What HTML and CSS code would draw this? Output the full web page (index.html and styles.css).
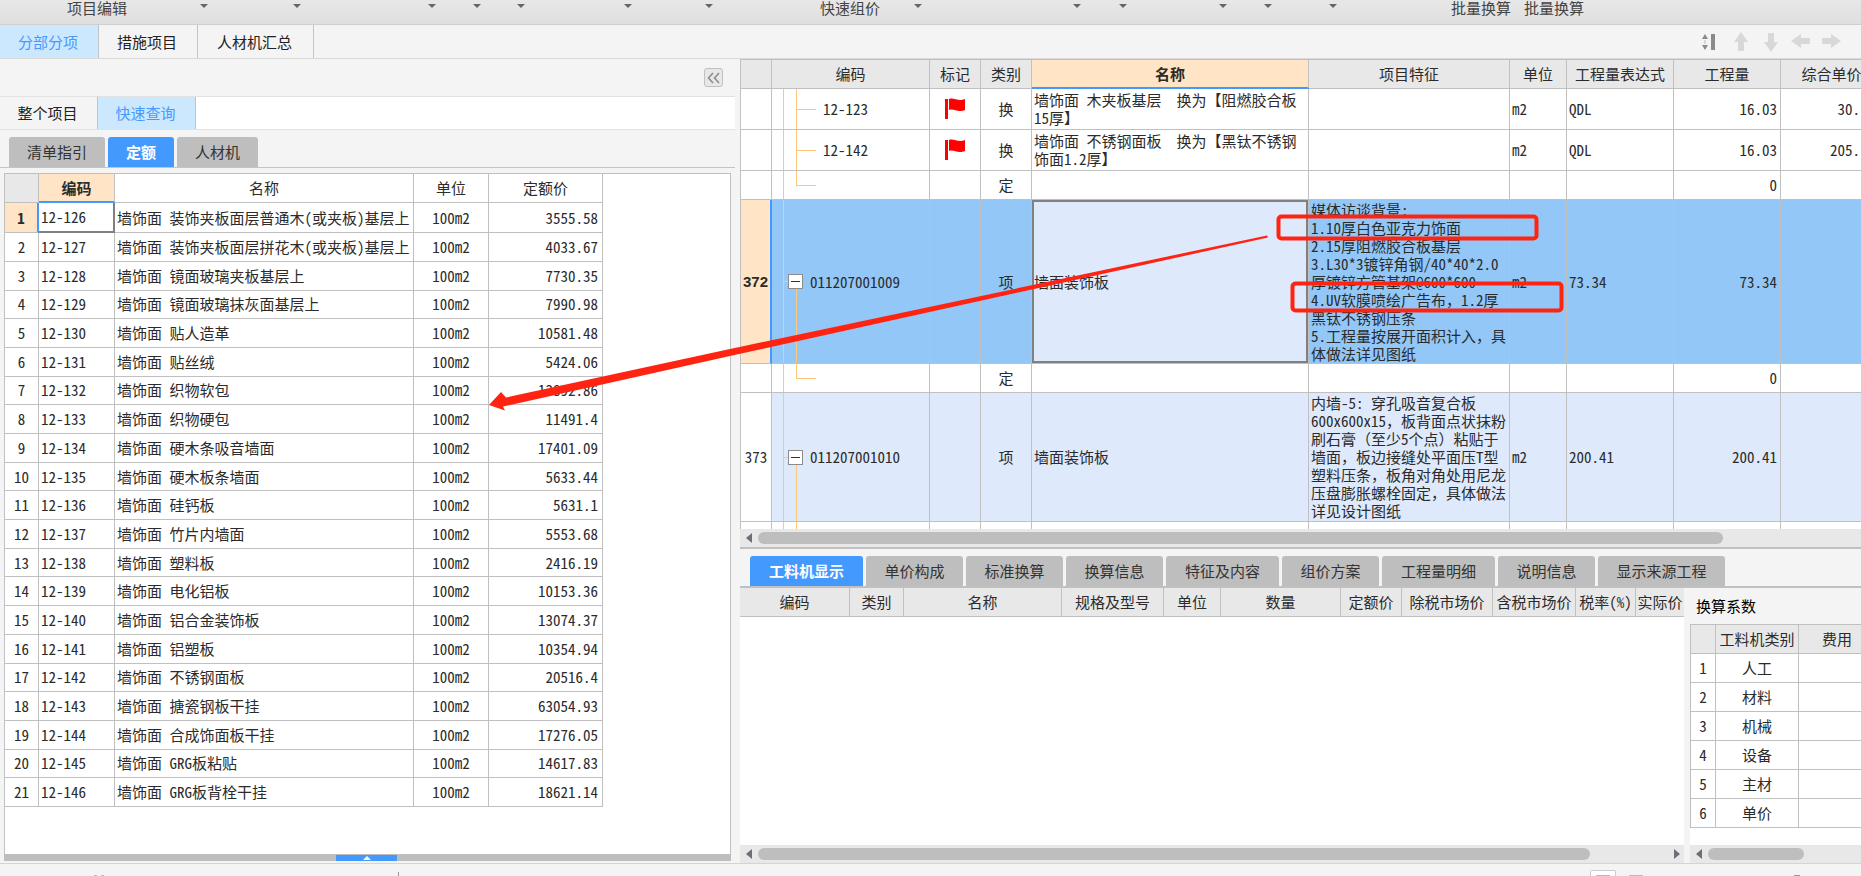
FILE: index.html
```html
<!DOCTYPE html>
<html lang="zh-CN">
<head>
<meta charset="utf-8">
<title>分部分项</title>
<link rel="stylesheet" href="styles.css">
</head>
<body>
<header class="ribbon">
  <button>项目编辑</button>
  <button aria-label="菜单"><i class="caret"></i></button>
  <button aria-label="菜单"><i class="caret"></i></button>
  <button aria-label="菜单"><i class="caret"></i></button>
  <button aria-label="菜单"><i class="caret"></i></button>
  <button aria-label="菜单"><i class="caret"></i></button>
  <button aria-label="菜单"><i class="caret"></i></button>
  <button aria-label="菜单"><i class="caret"></i></button>
  <button>快速组价</button>
  <button aria-label="菜单"><i class="caret"></i></button>
  <button aria-label="菜单"><i class="caret"></i></button>
  <button aria-label="菜单"><i class="caret"></i></button>
  <button aria-label="菜单"><i class="caret"></i></button>
  <button aria-label="菜单"><i class="caret"></i></button>
  <button aria-label="菜单"><i class="caret"></i></button>
  <button>批量换算</button>
  <button>批量换算</button>
</header>

<nav class="tabs main-tabs">
  <button class="tab active">分部分项</button>
  <button class="tab">措施项目</button>
  <button class="tab wide">人材机汇总</button>
  <div class="tools">
    <button aria-label="行高"><svg width="20" height="20" viewBox="0 0 20 20"><path d="M1 7l3-5 3 5zM1 13l3 5 3-5z" fill="#8a8a8a"/><path d="M4 8v4" stroke="#bbb" stroke-width="1"/><path d="M12 2v16" stroke="#8a8a8a" stroke-width="4"/></svg></button>
    <button aria-label="上移"><svg width="20" height="20" viewBox="0 0 20 20"><path d="M10 0l7 10h-4v9H7v-9H3z" fill="#d8d8d8"/></svg></button>
    <button aria-label="下移"><svg width="20" height="20" viewBox="0 0 20 20"><path d="M10 20l7-10h-4V1H7v9H3z" fill="#d8d8d8"/></svg></button>
    <button aria-label="左移"><svg width="20" height="20" viewBox="0 0 20 20"><path d="M0 9l10-7v4h9v6h-9v4z" fill="#d8d8d8"/></svg></button>
    <button aria-label="右移"><svg width="20" height="20" viewBox="0 0 20 20"><path d="M20 9L10 2v4H1v6h9v4z" fill="#d8d8d8"/></svg></button>
  </div>
</nav>

<main class="work">
  <section class="left">
    <div class="strip"><button class="collapse" aria-label="收起"><svg width="13" height="12" viewBox="0 0 13 12"><path d="M6 1L1.500 6L6 11M12 1L7.500 6L12 11" fill="none" stroke="#8c8c8c" stroke-width="1.600"/></svg></button></div>
    <nav class="tabs sub-tabs">
      <button class="tab">整个项目</button>
      <button class="tab active">快速查询</button>
    </nav>
    <nav class="pills left-pills">
      <button class="pill">清单指引</button>
      <button class="pill active">定额</button>
      <button class="pill">人材机</button>
    </nav>
    <div class="box">
      <table class="grid quota">
        <colgroup><col class="q0"><col class="q1"><col class="q2"><col class="q3"><col class="q4"></colgroup>
        <thead><tr><th class="corner"></th><th class="picked">编码</th><th>名称</th><th>单位</th><th>定额价</th></tr></thead>
        <tbody>
        <tr class="current"><th>1</th><td class="cursor">12-126</td><td>墙饰面 装饰夹板面层普通木(或夹板)基层上</td><td>100m2</td><td>3555.58</td></tr>
        <tr><th>2</th><td>12-127</td><td>墙饰面 装饰夹板面层拼花木(或夹板)基层上</td><td>100m2</td><td>4033.67</td></tr>
        <tr><th>3</th><td>12-128</td><td>墙饰面 镜面玻璃夹板基层上</td><td>100m2</td><td>7730.35</td></tr>
        <tr><th>4</th><td>12-129</td><td>墙饰面 镜面玻璃抹灰面基层上</td><td>100m2</td><td>7990.98</td></tr>
        <tr><th>5</th><td>12-130</td><td>墙饰面 贴人造革</td><td>100m2</td><td>10581.48</td></tr>
        <tr><th>6</th><td>12-131</td><td>墙饰面 贴丝绒</td><td>100m2</td><td>5424.06</td></tr>
        <tr><th>7</th><td>12-132</td><td>墙饰面 织物软包</td><td>100m2</td><td>13892.86</td></tr>
        <tr><th>8</th><td>12-133</td><td>墙饰面 织物硬包</td><td>100m2</td><td>11491.4</td></tr>
        <tr><th>9</th><td>12-134</td><td>墙饰面 硬木条吸音墙面</td><td>100m2</td><td>17401.09</td></tr>
        <tr><th>10</th><td>12-135</td><td>墙饰面 硬木板条墙面</td><td>100m2</td><td>5633.44</td></tr>
        <tr><th>11</th><td>12-136</td><td>墙饰面 硅钙板</td><td>100m2</td><td>5631.1</td></tr>
        <tr><th>12</th><td>12-137</td><td>墙饰面 竹片内墙面</td><td>100m2</td><td>5553.68</td></tr>
        <tr><th>13</th><td>12-138</td><td>墙饰面 塑料板</td><td>100m2</td><td>2416.19</td></tr>
        <tr><th>14</th><td>12-139</td><td>墙饰面 电化铝板</td><td>100m2</td><td>10153.36</td></tr>
        <tr><th>15</th><td>12-140</td><td>墙饰面 铝合金装饰板</td><td>100m2</td><td>13074.37</td></tr>
        <tr><th>16</th><td>12-141</td><td>墙饰面 铝塑板</td><td>100m2</td><td>10354.94</td></tr>
        <tr><th>17</th><td>12-142</td><td>墙饰面 不锈钢面板</td><td>100m2</td><td>20516.4</td></tr>
        <tr><th>18</th><td>12-143</td><td>墙饰面 搪瓷钢板干挂</td><td>100m2</td><td>63054.93</td></tr>
        <tr><th>19</th><td>12-144</td><td>墙饰面 合成饰面板干挂</td><td>100m2</td><td>17276.05</td></tr>
        <tr><th>20</th><td>12-145</td><td>墙饰面 GRG板粘贴</td><td>100m2</td><td>14617.83</td></tr>
        <tr><th>21</th><td>12-146</td><td>墙饰面 GRG板背栓干挂</td><td>100m2</td><td>18621.14</td></tr>
        </tbody>
      </table>
    </div>
    <div class="drawer"><button aria-label="展开"><i class="up"></i></button></div>
  </section>

  <section class="right">
    <div class="bill-wrap">
      <table class="grid bill">
        <colgroup><col class="b0"><col class="b1"><col class="b2"><col class="b2"><col class="b4"><col class="b5"><col class="b6"><col class="b7"><col class="b7"><col class="b9"></colgroup>
        <thead><tr><th></th><th>编码</th><th>标记</th><th>类别</th><th class="picked">名称</th><th>项目特征</th><th>单位</th><th>工程量表达式</th><th>工程量</th><th>综合单价</th></tr></thead>
        <tbody>
        <tr class="mid"><th></th><td class="leaf">12-123</td><td><svg class="flag" width="22" height="22" viewBox="0 0 22 22"><path d="M1 1h3v20H1z" fill="red"/><path d="M5 1c5-2 9 3 16 0v11c-8 3-11-2-16 0z" fill="red"/></svg></td><td>换</td><td>墙饰面 木夹板基层　换为【阻燃胶合板<br>15厚】</td><td></td><td>m2</td><td>QDL</td><td>16.03</td><td>30.</td></tr>
        <tr class="mid"><th></th><td class="leaf">12-142</td><td><svg class="flag" width="22" height="22" viewBox="0 0 22 22"><path d="M1 1h3v20H1z" fill="red"/><path d="M5 1c5-2 9 3 16 0v11c-8 3-11-2-16 0z" fill="red"/></svg></td><td>换</td><td>墙饰面 不锈钢面板　换为【黑钛不锈钢<br>饰面1.2厚】</td><td></td><td>m2</td><td>QDL</td><td>16.03</td><td>205.</td></tr>
        <tr><th></th><td class="leaf last"></td><td></td><td>定</td><td></td><td></td><td></td><td></td><td>0</td><td></td></tr>
        <tr class="item current tall"><th>372</th><td class="node"><span><button aria-label="折叠"></button>011207001009</span></td><td></td><td>项</td><td class="cursor">墙面装饰板</td><td>媒体访谈背景:<br>1.10厚白色亚克力饰面<br>2.15厚阻燃胶合板基层<br>3.L30*3镀锌角钢/40*40*2.0<br>厚镀锌方管基架@600*600<br>4.UV软膜喷绘广告布，1.2厚<br>黑钛不锈钢压条<br>5.工程量按展开面积计入，具<br>体做法详见图纸</td><td>m2</td><td>73.34</td><td>73.34</td><td></td></tr>
        <tr><th></th><td class="leaf last"></td><td></td><td>定</td><td></td><td></td><td></td><td></td><td>0</td><td></td></tr>
        <tr class="item"><th>373</th><td class="node"><span><button aria-label="折叠"></button>011207001010</span></td><td></td><td>项</td><td>墙面装饰板</td><td>内墙-5: 穿孔吸音复合板<br>600x600x15，板背面点状抹粉<br>刷石膏（至少5个点）粘贴于<br>墙面，板边接缝处平面压T型<br>塑料压条，板角对角处用尼龙<br>压盘膨胀螺栓固定，具体做法<br>详见设计图纸</td><td>m2</td><td>200.41</td><td>200.41</td><td></td></tr>
        <tr><th></th><td class="leaf"></td><td></td><td></td><td></td><td></td><td></td><td></td><td></td><td></td></tr>
        </tbody>
      </table>
    </div>
    <div class="scroll"><i class="sl"></i><div class="thumb bill-thumb"></div></div>
    <nav class="pills low-pills">
      <button class="pill p5 active">工料机显示</button>
      <button class="pill p4">单价构成</button>
      <button class="pill p4">标准换算</button>
      <button class="pill p4">换算信息</button>
      <button class="pill p5">特征及内容</button>
      <button class="pill p4">组价方案</button>
      <button class="pill p5">工程量明细</button>
      <button class="pill p4">说明信息</button>
      <button class="pill p6">显示来源工程</button>
    </nav>
    <div class="lower">
      <div class="res">
        <div class="res-wrap">
          <table class="grid resource">
            <colgroup><col class="r0"><col class="r1"><col class="r2"><col class="r3"><col class="r4"><col class="r5"><col class="r6"><col class="r7"><col class="r8"><col class="r9"><col class="r10"></colgroup>
            <thead><tr><th>编码</th><th>类别</th><th>名称</th><th>规格及型号</th><th>单位</th><th>数量</th><th>定额价</th><th>除税市场价</th><th>含税市场价</th><th>税率(%)</th><th class="end">实际价</th></tr></thead>
          </table>
        </div>
        <div class="scroll"><i class="sl"></i><div class="thumb res-thumb"></div><i class="sr"></i></div>
      </div>
      <div class="coef">
        <h2>换算系数</h2>
        <div class="coef-wrap">
          <table class="grid factor">
            <colgroup><col class="f0"><col class="f1"><col class="f2"></colgroup>
            <thead><tr><th></th><th>工料机类别</th><th>费用</th></tr></thead>
            <tbody>
            <tr><th>1</th><td>人工</td><td></td></tr>
            <tr><th>2</th><td>材料</td><td></td></tr>
            <tr><th>3</th><td>机械</td><td></td></tr>
            <tr><th>4</th><td>设备</td><td></td></tr>
            <tr><th>5</th><td>主材</td><td></td></tr>
            <tr><th>6</th><td>单价</td><td></td></tr>
            </tbody>
          </table>
        </div>
        <div class="scroll"><i class="sl"></i><div class="thumb coef-thumb"></div></div>
      </div>
    </div>
  </section>
</main>

<footer class="status">
  <i class="dots"></i>
  <i class="divider"></i>
  <button class="view" aria-label="视图"></button>
  <i class="dash"></i>
  <i class="knob"></i>
</footer>

<svg class="marks" width="1861" height="876" viewBox="0 0 1861 876" aria-hidden="true">
  <path d="M489 405L501 392L506 397.500L730 349L1267 235.500L1268 237.500L730 356L503 406.500L505 410.500Z" fill="#ff2412"/>
  <rect x="1278.500" y="216.500" width="258" height="22" rx="3" fill="none" stroke="#ff2412" stroke-width="4"/>
  <rect x="1292.500" y="283.500" width="269" height="27" rx="3" fill="none" stroke="#ff2412" stroke-width="4"/>
</svg>
</body>
</html>
```
FILE: styles.css
```css
* { box-sizing: border-box; }

body {
  margin: 0;
  height: 100vh;
  display: flex;
  flex-direction: column;
  overflow: hidden;
  position: relative;
  background: #f4f4f4;
  color: #2b2b2b;
  font: 15px/18px "Noto Sans Mono CJK SC", "Noto Sans CJK SC", sans-serif;
}

button {
  font: inherit;
  color: inherit;
  background: none;
  border: 0;
  padding: 0;
}

/* ribbon */
.ribbon {
  height: 25px;
  flex: none;
  display: grid;
  grid-template-columns: 127px 81px 93px 135px 45px 44px 107px 81px 167px 42px 159px 46px 100px 45px 65px 174px 73px;
  background: linear-gradient(#e7e7e7, #dfdfdf);
  border-bottom: 1px solid #cfcfcf;
}
.ribbon button {
  height: 16px;
  display: flex;
  justify-content: flex-end;
  align-items: center;
  white-space: nowrap;
  line-height: 16px;
  color: #444;
}
.caret {
  margin-top: -4px;
  border: 4px solid transparent;
  border-top: 4px solid #666;
  border-bottom: 0;
}

/* rectangular tabs */
.tabs {
  display: flex;
  flex: none;
  border-bottom: 1px solid #d9d9d9;
}
.tab {
  width: 99px;
  padding-right: 2px;
  border-right: 1px solid #c4c4c4;
  background: #f4f4f4;
  color: #222;
}
.tab.wide { width: 116px; }
.tab.active { background: #cce8ff; color: #4499ff; }
.main-tabs { height: 34px; }
.sub-tabs { height: 33px; background: #fff; border-bottom-color: #e2e2e2; }
.sub-tabs .tab { width: 98px; }
.tools {
  margin-left: auto;
  margin-right: 20px;
  display: flex;
  align-items: center;
  gap: 10px;
}
.tools svg, .collapse svg { display: block; }

/* panes */
.work {
  flex: 1;
  min-height: 0;
  display: grid;
  grid-template-columns: 735px minmax(0, 1fr);
  column-gap: 5px;
}
.left, .right {
  display: flex;
  flex-direction: column;
  min-width: 0;
  min-height: 0;
}
.strip {
  height: 38px;
  flex: none;
  display: flex;
  justify-content: flex-end;
  align-items: center;
  padding-right: 12px;
  border-bottom: 1px solid #e2e2e2;
}
.collapse {
  width: 19px;
  height: 19px;
  display: grid;
  place-items: center;
  border: 1px solid #c0c0c0;
  border-radius: 3px;
  background: #e8e8e8;
}

/* rounded tabs */
.pills {
  display: flex;
  align-items: flex-end;
  gap: 3px;
  flex: none;
}
.pill {
  height: 30px;
  background: #bebebe;
  border-radius: 3px 3px 0 0;
  color: #333;
}
.pill.active { background: #4499ff; color: #fff; font-weight: bold; }
.left-pills {
  height: 38px;
  padding-left: 9px;
  border-bottom: 1px solid #c4c4c4;
}
.left-pills .pill { padding: 0 18px; }
.low-pills {
  height: 41px;
  padding-left: 10px;
  border-top: 2px solid #c0c0c0;
  border-bottom: 2px solid #c0c0c0;
}
.p4 { width: 97px; }
.p5 { width: 113px; }
.p6 { width: 127px; }

/* grids */
.grid {
  table-layout: fixed;
  border-collapse: separate;
  border-spacing: 0;
}
.grid th, .grid td {
  padding: 0 2px;
  height: 29px;
  border-right: 1px solid #c0c0c0;
  border-bottom: 1px solid #c0c0c0;
  font-weight: normal;
  white-space: nowrap;
  text-align: center;
}
.grid thead .picked {
  background: #ffe5c5;
  font-weight: bold;
  border-bottom: 2px solid #4499ff;
}

.box {
  flex: 1;
  min-height: 0;
  margin: 5px 4px 0;
  border: 1px solid #c0c0c0;
  border-bottom: 0;
  background: #fff;
}
.quota { width: 598px; height: 633px; }
.quota tbody th, .quota tbody td { height: auto; }
.quota .corner { background: #e8e8e8; }
.quota td:nth-child(2), .quota td:nth-child(3) { text-align: left; }
.quota td:nth-child(5) { text-align: right; padding-right: 4px; }
.quota .current th { background: #ffe5c5; font-weight: bold; border-right: 2px solid #4499ff; }
.quota .cursor { border-right: 2px solid #808080; border-bottom: 2px solid #808080; }
.q0 { width: 34px; }
.q1 { width: 76px; }
.q2 { width: 299px; }
.q3 { width: 75px; }
.q4 { width: 114px; }

.drawer {
  height: 7px;
  flex: none;
  margin: 0 4px 2px;
  padding-left: 332px;
  background: #bebebe;
  display: flex;
  align-items: flex-end;
}
.drawer button {
  width: 61px;
  height: 6px;
  display: grid;
  place-items: center;
  background: #4499ff;
}
.up { border: 4px solid transparent; border-top: 0; border-bottom: 4px solid #fff; }

.bill-wrap {
  height: 470px;
  flex: none;
  overflow: hidden;
  background: #fff;
  border-left: 1px solid #c0c0c0;
  border-top: 1px solid #c0c0c0;
}
.bill { width: 1142px; }
.bill thead th { background: #e8e8e8; }
.bill tbody th { padding: 0; }
.bill .mid td { height: 41px; }
.bill td:nth-child(n+5) { text-align: left; }
.bill td:nth-child(n+9) { text-align: right; padding-right: 3px; }
.bill td:nth-child(10) { padding-right: 22px; }
.bill .item td { height: 129px; background-color: #dee9fc; }
.bill .tall td { height: 164px; background-color: #92c7f7; }
.bill .tall th { background: #ffe5c5; border-right: 2px solid #4499ff; font: bold 15px "Liberation Sans", sans-serif; }
.bill .tall .cursor { background: #dee9fc; box-shadow: inset 0 0 0 2px #808080; }
.flag { display: block; margin: 0 auto; }
.b0 { width: 31px; }
.b1 { width: 158px; }
.b2 { width: 51px; }
.b4 { width: 277px; }
.b5 { width: 201px; }
.b6 { width: 57px; }
.b7 { width: 107px; }
.b9 { width: 102px; }

/* tree guides */
.bill .leaf, .bill .node {
  text-align: left;
  background-image: linear-gradient(#ffc878, #ffc878), linear-gradient(#ffc878, #ffc878), linear-gradient(#ffc878, #ffc878);
  background-repeat: no-repeat;
}
.bill .leaf {
  padding-left: 51px;
  background-position: 11px 0, 24px 0, 24px 50%;
  background-size: 1px 100%, 1px 100%, 20px 1px;
}
.bill .leaf.last { background-size: 1px 100%, 1px 50%, 20px 1px; }
.bill .node {
  padding-left: 16px;
  background-position: 11px 0, 24px 100%, 11px 50%;
  background-size: 1px 100%, 1px 50%, 6px 1px;
}
.node span { display: flex; align-items: center; gap: 7px; }
.node button {
  width: 15px;
  height: 15px;
  border: 1px solid #8c8c8c;
  background: linear-gradient(#333, #333) center / 9px 1px no-repeat #fff;
}

/* scroll bars */
.scroll {
  height: 18px;
  flex: none;
  display: flex;
  align-items: center;
  background: #e8e8e8;
  padding-left: 6px;
}
.sl { border: 5px solid transparent; border-left: 0; border-right: 6px solid #6e6e78; margin-right: 6px; }
.sr { border: 5px solid transparent; border-right: 0; border-left: 6px solid #6e6e78; margin: 0 4px 0 84px; }
.thumb { height: 12px; border-radius: 6px; background: #bebebe; }
.bill-thumb { flex: 1; margin-right: 138px; }
.res-thumb { flex: 1; }
.coef-thumb { width: 96px; }

/* lower panes */
.lower {
  flex: 1;
  min-height: 0;
  display: grid;
  grid-template-columns: minmax(0, 1fr) 171px;
  column-gap: 6px;
}
.res, .coef { display: flex; flex-direction: column; min-width: 0; min-height: 0; }
.res-wrap { flex: 1; overflow: hidden; background: #fff; }
.resource { width: 944px; }
.resource th { background: #e8e8e8; }
.resource .end { padding: 0; border-right: 0; }
.r0 { width: 110px; }
.r1 { width: 54px; }
.r2 { width: 158px; }
.r3 { width: 102px; }
.r4 { width: 57px; }
.r5 { width: 120px; }
.r6 { width: 61px; }
.r7 { width: 91px; }
.r8 { width: 83px; }
.r9 { width: 60px; }
.r10 { width: 48px; }
.coef h2 {
  margin: 0;
  height: 36px;
  flex: none;
  padding: 9px 6px 0;
  font-size: 15px;
  font-weight: normal;
  color: #000;
}
.coef-wrap { flex: 1; overflow: hidden; background: #fff; }
.factor { width: 185px; border-left: 1px solid #c0c0c0; border-top: 1px solid #c0c0c0; }
.factor thead th { background: #e8e8e8; }
.f0 { width: 25px; }
.f1 { width: 83px; }
.f2 { width: 77px; }

/* status bar */
.status {
  height: 13px;
  flex: none;
  display: flex;
  align-items: flex-end;
  border-top: 1px solid #d4d4d4;
}
.dots { width: 10px; height: 1px; margin-left: 94px; border: solid #bbb; border-width: 0 3px; }
.divider { width: 1px; height: 4px; margin-left: 294px; background: #999; }
.view {
  width: 26px;
  height: 6px;
  margin-left: auto;
  border: 1px solid #ccc;
  border-bottom: 0;
  border-radius: 2px 2px 0 0;
  background: linear-gradient(#8fc4fa, #8fc4fa) center bottom / 14px 1px no-repeat #fff;
}
.dash { width: 14px; height: 1px; margin-left: 13px; background: #bbb; }
.knob { width: 6px; height: 1px; margin: 0 61px 0 151px; background: #999; }

/* hand-drawn markup above the panes */
.marks { position: absolute; left: 0; top: 0; pointer-events: none; }
```
